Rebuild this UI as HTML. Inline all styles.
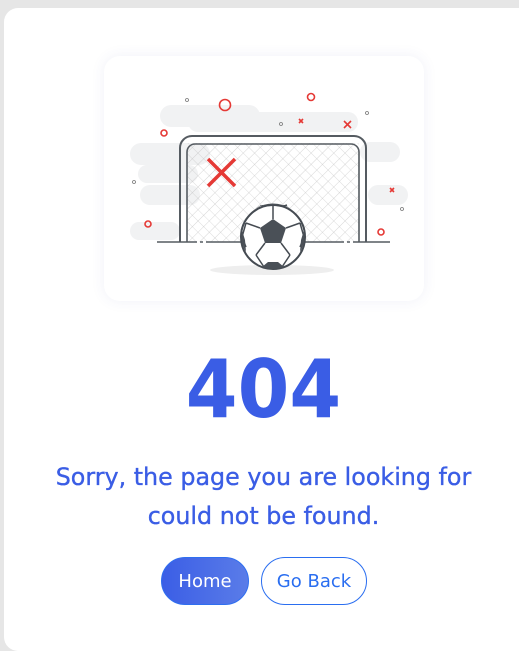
<!DOCTYPE html>
<html><head><style>
html,body{margin:0;padding:0;width:519px;height:651px;overflow:hidden;background:#e6e6e6;font-family:"DejaVu Sans",sans-serif}
.card{position:absolute;left:4px;top:8px;width:530px;height:643px;background:#fff;border-radius:14px}
.ill{position:absolute;left:104px;top:56px;width:320px;height:245px;background:#fff;border-radius:16px;box-shadow:0 0 14px rgba(60,80,160,0.08)}
h1{position:absolute;left:0;width:527px;top:342px;margin:0;text-align:center;font-size:80px;font-weight:bold;color:#3a5de5;line-height:96px;transform:scaleX(0.93);transform-origin:263px 0}
p{position:absolute;left:0;width:527px;top:458px;margin:0;text-align:center;font-size:23.8px;color:#3a5de5;line-height:39px;-webkit-text-stroke:0.35px #3a5de5}
.b{position:absolute;top:557px;height:48px;border-radius:24px;font-size:18px;line-height:48px;text-align:center;box-sizing:border-box}
.home{left:161px;width:88px;background:linear-gradient(90deg,#3b5ee6,#5a7ce8);color:#fff;border:1px solid #2f6ff0}
.back{left:261px;width:106px;border:1px solid #2a6ef0;color:#2a6ef0;background:#fff}
</style></head><body>
<div class="card"></div>
<div class="ill"></div>
<svg style="position:absolute;left:0;top:0" width="519" height="651">
<defs><pattern id="net" width="8" height="8" patternUnits="userSpaceOnUse" patternTransform="rotate(45)"><path d="M0 0H8M0 0V8" stroke="#bbb" stroke-width="0.6" fill="none"/></pattern></defs>
<g fill="#f1f2f3">
<rect x="160" y="105" width="100" height="22" rx="11"/><rect x="188" y="112" width="170" height="20" rx="10"/>
<rect x="130" y="143" width="80" height="22" rx="11"/><rect x="138" y="165" width="60" height="18" rx="9"/>
<rect x="140" y="185" width="60" height="20" rx="10"/><rect x="130" y="222" width="50" height="18" rx="9"/>
<rect x="360" y="142" width="40" height="20" rx="10"/><rect x="368" y="185" width="40" height="20" rx="10"/>
</g>
<rect x="187" y="143" width="172" height="99" fill="url(#net)"/>
<path d="M180 242V148a12 12 0 0 1 12-12h162a12 12 0 0 1 12 12v94" fill="none" stroke="#555b61" stroke-width="2"/>
<path d="M187 242V152a8 8 0 0 1 8-8h156a8 8 0 0 1 8 8v90" fill="none" stroke="#555b61" stroke-width="1.6"/>
<path d="M157 242H390" stroke="#555b61" stroke-width="1.6" stroke-dasharray="40 3 3 3"/>
<ellipse cx="272" cy="270" rx="62" ry="5" fill="#eee"/>
<path d="M208 159L235 186M235 159L208 186" stroke="#e53935" stroke-width="3.5"/>
<g stroke="#e53935" stroke-width="1.6" fill="none">
<circle cx="225" cy="105" r="5.5"/><circle cx="311" cy="97" r="3.5"/><circle cx="164" cy="133" r="3"/><circle cx="148" cy="224" r="3"/><circle cx="381" cy="232" r="3"/>
<path d="M344 121l7 7M351 121l-7 7M299 119l4 4M303 119l-4 4M390 188l4 4M394 188l-4 4"/>
</g>
<g stroke="#777" stroke-width="0.8" fill="none"><circle cx="187" cy="100" r="1.5"/><circle cx="281" cy="124" r="1.5"/><circle cx="367" cy="113" r="1.5"/><circle cx="134" cy="182" r="1.5"/><circle cx="402" cy="209" r="1.5"/></g>
<circle cx="273" cy="237" r="32" fill="#fff" stroke="#454b52" stroke-width="2"/>
<path d="M273 219l13 9-5 15h-16l-5-15z" fill="#4a5057"/>
<path d="M273 219v-14M286 228l14-5M281 243l9 12M265 243l-9 12M260 228l-14-5" stroke="#454b52" stroke-width="1.5"/>
<path d="M262 206l11-1 11 1 3 -1M300 223l4 14-4 10M290 255l-8 12M256 255l8 12M246 223l-4 14 4 10" stroke="#454b52" stroke-width="1.5" fill="none"/>
<path d="M255 209a32 32 0 0 1 36 0l-6 -4h-24z" fill="#4a5057"/>
<path d="M304 230a32 32 0 0 1 -4 22l1-12z" fill="#4a5057"/>
<path d="M242 230a32 32 0 0 0 4 22l-1-12z" fill="#4a5057"/>
<path d="M262 267a32 32 0 0 0 22 0l-6-5h-10z" fill="#4a5057"/>
</svg>
<h1>404</h1>
<p>Sorry, the page you are looking for<br>could not be found.</p>
<div class="b home">Home</div>
<div class="b back">Go Back</div>
</body></html>
